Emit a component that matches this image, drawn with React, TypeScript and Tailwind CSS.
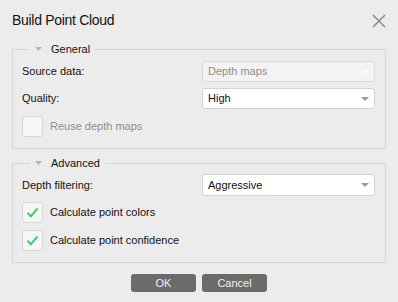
import type { ReactNode } from 'react'

const font = { fontFamily: '"Liberation Sans", Arial, sans-serif' }

function Caret({ light }: { light?: boolean }) {
  return (
    <svg width="8" height="4" viewBox="0 0 8 4" aria-hidden="true">
      <path d="M0 0h8L4 4z" fill={light ? '#ffffff' : '#9a9a9a'} />
    </svg>
  )
}

function Select({ value, disabled }: { value: string; disabled?: boolean }) {
  return (
    <div
      className={`w-[173px] h-full flex items-center justify-between pl-[5px] pr-[5px] rounded-[3px] border ${
        disabled ? 'bg-[#f3f3f3] border-[#dadada] text-[#8e8e8e]' : 'bg-white border-[#d3d3d3] text-[#111]'
      }`}
    >
      <span className="text-[11px] leading-none">{value}</span>
      <Caret light={disabled} />
    </div>
  )
}

function Check({ label, checked, disabled }: { label: string; checked?: boolean; disabled?: boolean }) {
  return (
    <div className="h-[22px] flex items-start gap-[7px]">
      <span className="w-[21px] h-[21px] rounded-[3px] border border-[#d6d6d6] bg-[#f6f6f6] flex items-center justify-center">
        {checked && (
          <svg width="13" height="11" viewBox="0 0 13 11" aria-hidden="true">
            <path d="M1.5 5.8 4.8 9.2 11.5 1.5" fill="none" stroke="#3ccf6e" strokeWidth="2" />
          </svg>
        )}
      </span>
      <span className={`text-[11px] leading-[21px] ${disabled ? 'text-[#8c8c8c]' : 'text-[#111]'}`}>{label}</span>
    </div>
  )
}

function Group({ title, children, className }: { title: string; children: ReactNode; className?: string }) {
  return (
    <fieldset className={`mx-[12px] border border-[#d6d6d6] pl-[9px] pr-[10px] pb-[10px] ${className ?? ''}`}>
      <legend className="ml-[8px] px-[5px] h-[16px] flex items-center gap-[9px]">
        <svg width="7" height="4" viewBox="0 0 7 4" aria-hidden="true">
          <path d="M0 0h7L3.5 4z" fill="#b4b4b4" />
        </svg>
        <span className="text-[11px] text-[#111] leading-[16px]">{title}</span>
      </legend>
      {children}
    </fieldset>
  )
}

export default function App() {
  return (
    <div className="w-[398px] h-[302px] bg-[#ececec] overflow-hidden" style={font}>
      {/* title bar */}
      <div className="h-[41px] flex items-start justify-between pl-[12px] pr-[12px] pt-[11px]">
        <h1 className="text-[14px] leading-[18px] tracking-[-0.3px] text-[#111]">Build Point Cloud</h1>
        <svg width="14" height="14" viewBox="0 0 14 14" className="mt-[3px]" aria-hidden="true">
          <path d="M1 1 13 13M13 1 1 13" stroke="#8d8d8d" strokeWidth="1.6" />
        </svg>
      </div>

      <Group title="General" className="pt-[4px]">
        <div className="flex flex-col gap-[6px]">
          <div className="h-[21px] flex items-center justify-between">
            <span className="text-[11px] text-[#111]">Source data:</span>
            <Select value="Depth maps" disabled />
          </div>
          <div className="h-[22px] pb-[1px] flex items-center justify-between">
            <span className="text-[11px] text-[#111]">Quality:</span>
            <Select value="High" />
          </div>
          <Check label="Reuse depth maps" disabled />
        </div>
      </Group>

      <Group title="Advanced" className="mt-[6px] pt-[3px]">
        <div className="flex flex-col gap-[6px]">
          <div className="h-[22px] flex items-center justify-between">
            <span className="text-[11px] text-[#111]">Depth filtering:</span>
            <Select value="Aggressive" />
          </div>
          <Check label="Calculate point colors" checked />
          <Check label="Calculate point confidence" checked />
        </div>
      </Group>

      <div className="mt-[11px] flex justify-center gap-[6px]">
        <button className="w-[65px] h-[18px] rounded-[3px] bg-[#6b6b6b] text-[11px] text-[#f2f2f2] leading-none">
          OK
        </button>
        <button className="w-[65px] h-[18px] rounded-[3px] bg-[#6b6b6b] text-[11px] text-[#f2f2f2] leading-none">
          Cancel
        </button>
      </div>
    </div>
  )
}
